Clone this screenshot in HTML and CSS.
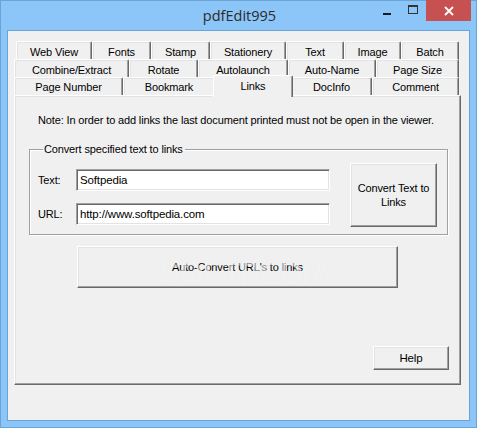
FILE: index.html
```html
<!DOCTYPE html>
<html>
<head>
<meta charset="utf-8">
<title>pdfEdit995</title>
<link rel="stylesheet" href="styles.css">
</head>
<body>
<div class="window">
  <div class="titlebar">
    <div class="title">pdfEdit995</div>
    <div class="controls">
      <div class="ctl min"><span class="dash"></span></div>
      <div class="ctl max"><span class="box"></span></div>
      <div class="ctl close">
        <svg width="10" height="10" viewBox="0 0 10 10"><path d="M1 1L9 9M9 1L1 9" stroke="#fff" stroke-width="1.8"/></svg>
      </div>
    </div>
  </div>
  <div class="client">
    <div class="tabs">
      <div class="row row1">
        <div class="tab">Web View</div>
        <div class="tab">Fonts</div>
        <div class="tab">Stamp</div>
        <div class="tab">Stationery</div>
        <div class="tab">Text</div>
        <div class="tab">Image</div>
        <div class="tab">Batch</div>
      </div>
      <div class="row row2">
        <div class="tab">Combine/Extract</div>
        <div class="tab">Rotate</div>
        <div class="tab">Autolaunch</div>
        <div class="tab">Auto-Name</div>
        <div class="tab">Page Size</div>
      </div>
      <div class="row row3">
        <div class="tab">Page Number</div>
        <div class="tab">Bookmark</div>
        <div class="tab selected">Links</div>
        <div class="tab">DocInfo</div>
        <div class="tab">Comment</div>
      </div>
    </div>
    <div class="panel">
      <div class="note">Note: In order to add links the last document printed must not be open in the viewer.</div>
      <fieldset class="group">
        <legend>Convert specified text to links</legend>
        <div class="group-body">
          <div class="fields">
            <div class="field">
              <span class="label">Text:</span>
              <div class="input">Softpedia</div>
            </div>
            <div class="field">
              <span class="label">URL:</span>
              <div class="input">http://www.softpedia.com</div>
            </div>
          </div>
          <div class="btn convert">Convert Text to<br>Links</div>
        </div>
      </fieldset>
      <div class="btn auto">Auto-Convert URL's to links</div>
      <div class="btn help">Help</div>
      <div class="watermark">SOFTPEDIA<sup>®</sup></div>
    </div>
  </div>
</div>
</body>
</html>
```
FILE: styles.css
```css
* { box-sizing: border-box; }
html, body {
  margin: 0;
  padding: 0;
  width: 477px;
  height: 428px;
  overflow: hidden;
  background: #8cc5f7;
}
.window {
  width: 477px;
  height: 428px;
  border: 1px solid #6aa3d6;
  background: #8cc5f7;
  padding: 0 6px 6px 6px;
  display: flex;
  flex-direction: column;
  font-family: "Liberation Sans", Arial, sans-serif;
  font-size: 11px;
  letter-spacing: -0.14px;
  color: #000;
}
.titlebar {
  height: 29px;
  position: relative;
  display: flex;
  align-items: center;
  justify-content: center;
}
.title {
  font-family: "Open Sans", "Noto Sans", sans-serif;
  font-size: 14.5px;
  letter-spacing: 0;
  color: #2b2b2b;
  margin-top: -1px;
  padding-left: 2px;
}
.controls {
  position: absolute;
  top: -1px;
  right: -1px;
  display: flex;
  align-items: flex-start;
}
.ctl {
  height: 21px;
  display: flex;
  align-items: center;
  justify-content: center;
}
.min { width: 26px; }
.min .dash {
  width: 8px;
  height: 2px;
  background: #1a1a1a;
  margin-top: 6px;
}
.max { width: 26px; }
.max .box {
  width: 10px;
  height: 9px;
  border: 1px solid #333;
  border-top-width: 2px;
  margin-top: -3px;
}
.close {
  width: 45px;
  background: #c75050;
}
.client {
  flex: 1;
  border: 1px solid #6aa3d6;
  background: #f0f0f0;
  padding: 10px 6px 0 6px;
  display: flex;
  flex-direction: column;
}
.tabs {
  display: flex;
  flex-direction: column;
  position: relative;
  z-index: 2;
}
.row {
  display: grid;
  height: 18px;
}
.row1 { grid-template-columns: 76px 59px 59px 76px 58px 57px 58px; margin-left: 2px; }
.row2 { grid-template-columns: 115px 69px 90px 88px 83px; }
.row3 { grid-template-columns: 109px 92px 76px 81px 87px; }
.tab {
  height: 19px;
  background: #f0f0f0;
  border-top: 1px solid #fff;
  border-left: 1px solid #fff;
  border-right: 1px solid #696969;
  box-shadow: inset -1px 0 0 #a0a0a0, inset 1px 1px 0 #e3e3e3;
  border-top-left-radius: 2px;
  border-top-right-radius: 2px;
  display: flex;
  align-items: center;
  justify-content: center;
  white-space: nowrap;
  padding-top: 1px;
}
.row3 .tab { height: 18px; }
.tab.selected {
  height: 22px;
  margin: -2px -2px -1px -2px;
  position: relative;
  z-index: 3;
  padding-bottom: 3px;
  box-shadow: inset -1px 0 0 #a0a0a0;
}
.panel {
  position: relative;
  z-index: 1;
  width: 447px;
  height: 290px;
  border-top: 1px solid #fff;
  border-left: 1px solid #fff;
  border-right: 1px solid #696969;
  border-bottom: 1px solid #696969;
  box-shadow: inset -1px -1px 0 #a0a0a0, inset 1px 1px 0 #e3e3e3;
  display: flex;
  flex-direction: column;
  align-items: flex-start;
  padding: 18px 0 0 0;
}
.note {
  margin-left: 23px;
  line-height: 13px;
  white-space: nowrap;
}
.group {
  margin: 16px 0 0 14px;
  width: 419px;
  padding: 0 10px 7px 8px;
  border: 1px solid #a0a0a0;
  box-shadow: inset 1px 1px 0 #fff, 1px 1px 0 #fff;
  min-width: 0;
}
.group legend {
  padding: 0 2px 0 1px;
  margin-left: 5px;
  line-height: 13px;
}
.group-body {
  display: flex;
  align-items: flex-start;
  gap: 20px;
  padding-top: 7px;
}
.fields {
  display: flex;
  flex-direction: column;
  gap: 12px;
  padding-top: 6px;
}
.field {
  display: flex;
  align-items: center;
}
.label {
  width: 38px;
}
.input {
  width: 254px;
  height: 22px;
  background: #fff;
  border-top: 1px solid #a0a0a0;
  border-left: 1px solid #a0a0a0;
  border-right: 1px solid #fff;
  border-bottom: 1px solid #fff;
  box-shadow: inset 1px 1px 0 #696969, inset -1px -1px 0 #e3e3e3;
  padding: 3px 0 0 3px;
  line-height: 14px;
  font-size: 11.5px;
}
.btn {
  background: #f0f0f0;
  border-top: 1px solid #fff;
  border-left: 1px solid #fff;
  border-right: 1px solid #696969;
  border-bottom: 1px solid #696969;
  box-shadow: inset -1px -1px 0 #a0a0a0, inset 1px 1px 0 #e3e3e3;
  display: flex;
  align-items: center;
  justify-content: center;
  text-align: center;
  line-height: 13px;
}
.convert {
  width: 87px;
  height: 64px;
  font-size: 11px;
  line-height: 14px;
}
.auto {
  margin: 11px 0 0 62px;
  width: 321px;
  height: 42px;
  position: relative;
  z-index: 1;
}
.help {
  margin: 58px 0 0 358px;
  width: 76px;
  height: 24px;
  font-size: 11.5px;
}
.watermark {
  position: absolute;
  left: 144px;
  top: 160px;
  font-family: "Liberation Sans", Arial, sans-serif;
  font-weight: bold;
  font-size: 31px;
  letter-spacing: -0.5px;
  color: rgba(255, 255, 255, 0.55);
  text-shadow: 0 0 1px rgba(0, 0, 0, 0.06);
  z-index: 2;
  pointer-events: none;
}
.watermark sup {
  font-size: 9px;
  vertical-align: top;
  position: relative;
  top: 2px;
}
```
